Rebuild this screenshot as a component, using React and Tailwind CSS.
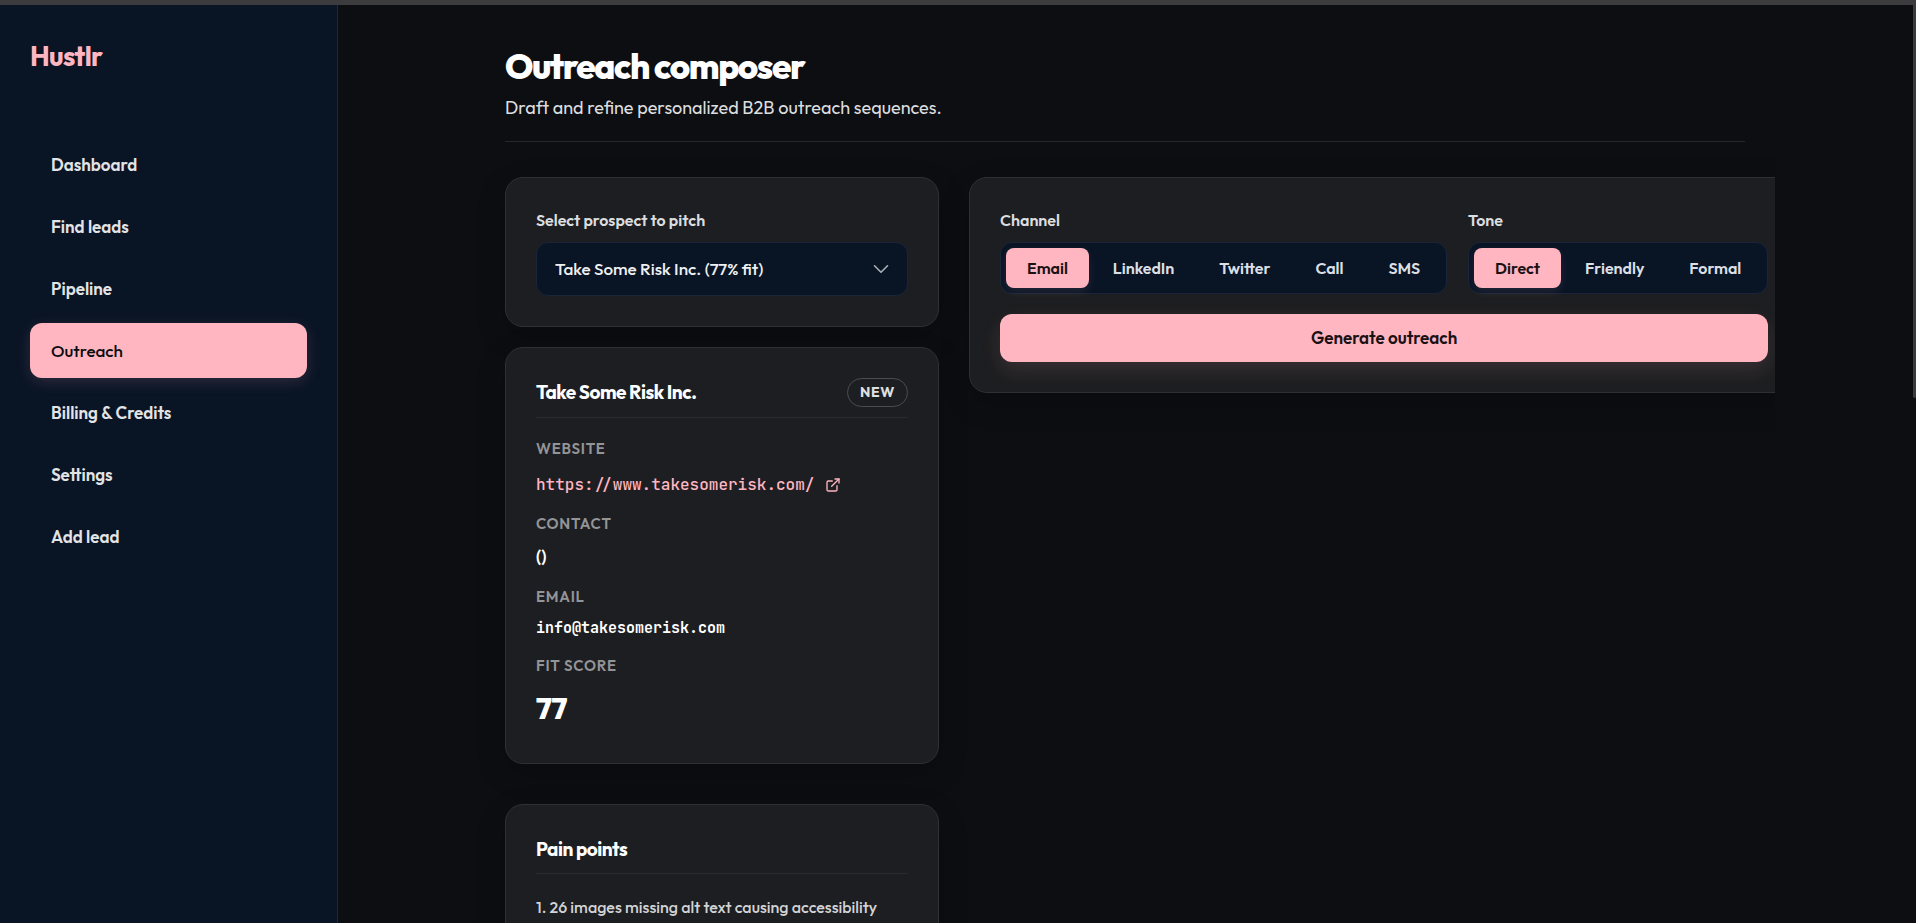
import { useState } from "react";
import { ChevronDown, ExternalLink } from "lucide-react";

const NAV = ["Dashboard", "Find leads", "Pipeline", "Outreach", "Billing & Credits", "Settings", "Add lead"];
const CHANNELS = ["Email", "LinkedIn", "Twitter", "Call", "SMS"];
const TONES = ["Direct", "Friendly", "Formal"];

const CARD = "rounded-[18px] border border-[#2e3033] bg-[#1d1e21] p-[30px] shadow-[0_10px_30px_rgba(0,0,0,0.2)]";

function Sidebar() {
  return (
    <aside className="w-[338px] shrink-0 border-r border-[#202a33] bg-[#091425] px-[30px] pt-[33px]">
      <div className="text-[27px] leading-[36px] font-bold text-[#ffb6c1] tracking-tight">Hustlr</div>
      <nav className="mt-[63px] flex flex-col gap-[7px]">
        {NAV.map((item) => (
          <a
            key={item}
            href="#"
            aria-current={item === "Outreach" ? "page" : undefined}
            className={
              item === "Outreach"
                ? "rounded-xl bg-[#ffb6c1] px-[21px] py-4 text-[17px] leading-[23px] font-medium text-[#0b0c10] shadow-[0_4px_15px_rgba(255,182,193,0.15)]"
                : "rounded-xl px-[21px] py-4 text-[17px] leading-[23px] font-semibold text-[#e2e3e5]"
            }
          >
            {item}
          </a>
        ))}
      </nav>
    </aside>
  );
}

function Segmented({ label, options }) {
  const [value, setValue] = useState(options[0]);
  return (
    <div role="group" aria-label={label} className="shrink-0">
      <div className="text-[16px] leading-[24px] font-semibold text-[#dcdddf]">{label}</div>
      <div className="mt-[10px] flex gap-[3px] rounded-xl border border-[#1a2638] bg-[#091425] p-[5px]">
        {options.map((option) => (
          <button
            key={option}
            type="button"
            aria-pressed={option === value}
            onClick={() => setValue(option)}
            className={
              option === value
                ? "rounded-lg bg-[#ffb6c1] px-[21px] text-[16px] leading-[40px] font-semibold whitespace-nowrap text-[#1a1114] shadow-[0_4px_10px_rgba(255,182,193,0.1)]"
                : "rounded-lg px-[21px] text-[16px] leading-[40px] font-semibold whitespace-nowrap text-[#dcdfe3]"
            }
          >
            {option}
          </button>
        ))}
      </div>
    </div>
  );
}

function Term({ children }) {
  return <dt className="text-[15px] leading-[20px] font-semibold tracking-wider text-[#939498]">{children}</dt>;
}

export default function App() {
  return (
    <div className="h-screen overflow-hidden border-t-[5px] border-[#3c3b3d] bg-[#0d0e12] font-[Outfit,Lato,sans-serif] text-white">
      <div className="flex h-full">
        <Sidebar />
        <main className="min-w-0 flex-1 overflow-hidden">
          <div className="mx-auto max-w-[1300px] overflow-hidden px-[30px] pt-10 pb-10">
            <header className="border-b border-[#25272a] pb-[20px]">
              <h1 className="text-[35px] leading-[42px] font-extrabold tracking-[-0.04em]">Outreach composer</h1>
              <p className="mt-[7px] text-[18px] leading-[27px] text-[#dcdddf]">
                Draft and refine personalized B2B outreach sequences.
              </p>
            </header>

            <div className="mt-[35px] flex items-start gap-[30px]">
              <div className="w-[434px] shrink-0">
                <section className={CARD}>
                  <label htmlFor="prospect" className="block text-[16px] leading-[24px] font-semibold text-[#dcdddf]">
                    Select prospect to pitch
                  </label>
                  <div className="mt-[10px] grid items-center">
                    <select
                      id="prospect"
                      className="col-start-1 row-start-1 h-[54px] w-full appearance-none rounded-xl border border-[#1a2638] bg-[#091425] px-[18px] text-[17px] font-medium text-[#eef0f2]"
                    >
                      <option>Take Some Risk Inc. (77% fit)</option>
                    </select>
                    <ChevronDown
                      className="pointer-events-none col-start-1 row-start-1 mr-[14px] justify-self-end text-[#a9afb8]"
                      size={26}
                      strokeWidth={1.5}
                    />
                  </div>
                </section>

                <section className={`${CARD} mt-5`}>
                  <div className="flex items-center justify-between border-b border-[#292a2d] pb-[10px]">
                    <h2 className="text-[19px] leading-[29px] font-bold tracking-tight">Take Some Risk Inc.</h2>
                    <span className="rounded-full border border-[#4b4c4f] px-3 text-[14px] leading-[27px] font-bold tracking-wider text-[#dfe0e2]">
                      NEW
                    </span>
                  </div>
                  <dl className="pt-[21px] pb-[3px]">
                    <Term>WEBSITE</Term>
                    <dd className="mt-[13px] mb-4 text-[16px] leading-[26px]">
                      <a href="https://www.takesomerisk.com/" className="flex items-center gap-[11px] text-[#ffb6c1]">
                        <span className="font-[JetBrains_Mono,DejaVu_Sans_Mono,monospace] font-medium">
                          https://www.takesomerisk.com/
                        </span>
                        <ExternalLink size={16} strokeWidth={2} />
                      </a>
                    </dd>
                    <Term>CONTACT</Term>
                    <dd className="mt-[11px] mb-[18px] text-[17px] leading-[24px] font-semibold">()</dd>
                    <Term>EMAIL</Term>
                    <dd className="mt-[9px] mb-4 font-[JetBrains_Mono,DejaVu_Sans_Mono,monospace] text-[15px] leading-[24px] font-bold">
                      info@takesomerisk.com
                    </dd>
                    <Term>FIT SCORE</Term>
                    <dd className="mt-[11px] text-[30px] leading-[43px] font-extrabold">77</dd>
                  </dl>
                </section>

                <section className={`${CARD} mt-10`}>
                  <h2 className="border-b border-[#292a2d] pb-[9px] text-[19px] leading-[29px] font-bold tracking-tight">
                    Pain points
                  </h2>
                  <ol className="pt-[19px] text-[16px] leading-[28px] font-medium text-[#d2d3d5]">
                    <li>1. 26 images missing alt text causing accessibility</li>
                  </ol>
                </section>
              </div>

              <section className={`${CARD} shrink-0`}>
                <div className="flex gap-[21px]">
                  <Segmented label="Channel" options={CHANNELS} />
                  <Segmented label="Tone" options={TONES} />
                </div>
                <button
                  type="button"
                  className="mt-5 w-full rounded-xl bg-[#ffb6c1] text-[17px] leading-[48px] font-semibold text-[#1a1114] shadow-[0_8px_20px_rgba(255,182,193,0.12)]"
                >
                  Generate outreach
                </button>
              </section>
            </div>
          </div>
        </main>
        <div className="w-1 shrink-0 pl-px" aria-hidden="true">
          <div className="h-[393px] rounded-b-sm bg-[#3a3b3f]" />
        </div>
      </div>
    </div>
  );
}
